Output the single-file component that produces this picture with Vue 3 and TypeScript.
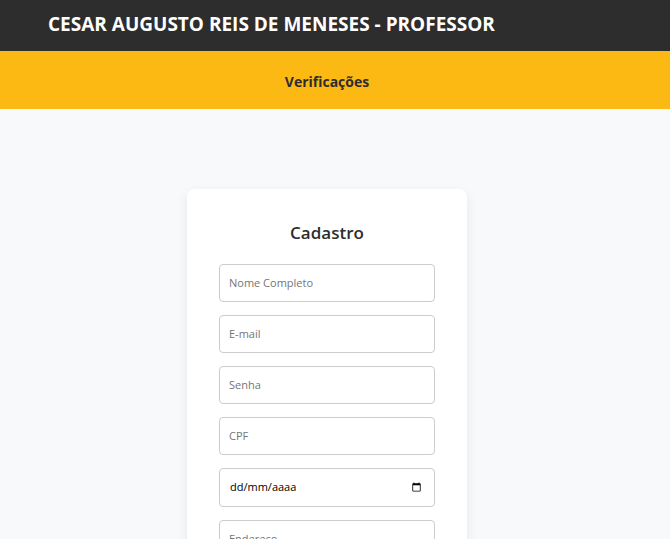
<script setup lang="ts">
import { computed, reactive, ref } from 'vue'

interface Field {
  id: string
  label: string
  type: string
}

const fields: Field[] = [
  { id: 'nome', label: 'Nome Completo', type: 'text' },
  { id: 'email', label: 'E-mail', type: 'email' },
  { id: 'senha', label: 'Senha', type: 'password' },
  { id: 'cpf', label: 'CPF', type: 'text' },
]

const values = reactive<Record<string, string>>({ nome: '', email: '', senha: '', cpf: '' })
const birthDate = ref('')
const address = ref('')

// The date is always shown in day/month/year order, whatever the browser locale.
const shownDate = computed(() =>
  birthDate.value ? birthDate.value.split('-').reverse().join('/') : 'dd/mm/aaaa',
)
</script>

<template>
  <div class="page">
    <header class="topbar">
      <h1>CESAR AUGUSTO REIS DE MENESES - PROFESSOR</h1>
    </header>
    <nav class="menu">
      <a href="#verificacoes">Verificações</a>
    </nav>
    <main class="content">
      <form class="card" @submit.prevent>
        <h2>Cadastro</h2>
        <input
          v-for="field in fields"
          :id="field.id"
          :key="field.id"
          v-model="values[field.id]"
          class="field"
          :type="field.type"
          :placeholder="field.label"
          :aria-label="field.label"
        />
        <label class="date">
          <input v-model="birthDate" class="field date-input" type="date" />
          <span class="date-text">{{ shownDate }}</span>
        </label>
        <input
          id="endereco"
          v-model="address"
          class="field"
          type="text"
          placeholder="Endereço"
          aria-label="Endereço"
        />
      </form>
    </main>
  </div>
</template>

<style>
body {
  margin: 0;
  background: #f8f9fb;
}
</style>

<style scoped>
.page {
  min-height: 100vh;
  font-family: 'Segoe UI', 'Open Sans', 'Noto Sans', sans-serif;
  color: #2d2d2d;
  background: #f8f9fb;
}

.topbar {
  padding: 11px 48px 13px;
  background: #2d2d2d;
}

h1 {
  margin: 0;
  font-size: 19px;
  line-height: 27px;
  font-weight: 700;
  white-space: nowrap;
  color: #fff;
}

.menu {
  display: flex;
  justify-content: center;
  padding: 18px 16px 14px 0;
  background: #fdb913;
}

.menu a {
  font-size: 14px;
  line-height: 26px;
  font-weight: 700;
  color: #2d2d2d;
  text-decoration: none;
}

.content {
  display: flex;
  justify-content: center;
  padding: 80px 16px 0 0;
}

.card {
  box-sizing: border-box;
  display: flex;
  flex-direction: column;
  gap: 13px;
  width: 280px;
  padding: 32px;
  border-radius: 8px;
  background: #fff;
  box-shadow: 0 4px 12px rgba(0, 0, 0, 0.08);
}

h2 {
  margin: 0 0 6px;
  font-size: 17px;
  line-height: 24px;
  font-weight: 600;
  text-align: center;
}

.field {
  box-sizing: border-box;
  width: 100%;
  height: 38px;
  margin: 0;
  padding: 0 9px 2px;
  border: 1px solid #ccc;
  border-radius: 4px;
  background: #fff;
  font-family: inherit;
  font-size: 11px;
  color: #000;
}

.field::placeholder {
  color: #757575;
}

.date {
  position: relative;
  display: block;
}

.date-input {
  display: block;
  height: 39px;
  padding: 0 10px 0 9px;
}

.date-input::-webkit-datetime-edit {
  color: transparent;
}

.date-text {
  position: absolute;
  inset: 0 auto 0 11px;
  font-size: 11px;
  line-height: 38px;
  color: #000;
  pointer-events: none;
}
</style>
